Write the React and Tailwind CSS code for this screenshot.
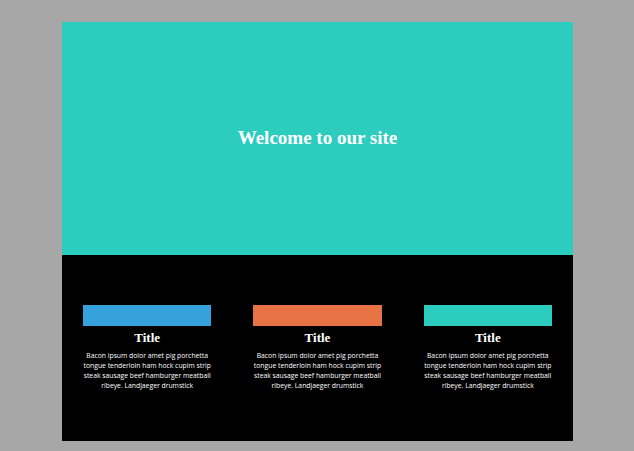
const cards = [
  { color: 'bg-[#36a2dc]' },
  { color: 'bg-[#e87446]' },
  { color: 'bg-[#2ccdbe]' },
];

const Card = ({ color }) => {
  return (
    <div className="flex flex-col items-center px-[21px]">
      <div className={`h-[21px] w-full ${color}`} />
      <h2 className="mt-[4px] text-[13px] leading-[16px] font-bold text-white font-['Liberation_Serif',serif]">Title</h2>
      <p className="mt-[5px] -mx-[2px] text-center text-[6.8px] leading-[10px] font-medium text-white font-['Open_Sans',sans-serif]">
        Bacon ipsum dolor amet pig porchetta tongue tenderloin ham hock cupim strip steak sausage beef hamburger meatball ribeye. Landjaeger drumstick
      </p>
    </div>
  );
};

export default function App() {
  return (
    <div className="min-h-[451px] w-full bg-[#a7a7a7] pt-[22px] pb-[10px]">
      <div className="ml-[62px] w-[511px]">
        <header className="flex h-[233px] items-center justify-center bg-[#2ccdbe]">
          <h1 className="text-[19px] font-bold text-white font-['Liberation_Serif',serif]">Welcome to our site</h1>
        </header>
        <section className="grid h-[186px] grid-cols-3 bg-black pt-[50px]">
          {cards.map((c, i) => (
            <Card key={i} color={c.color} />
          ))}
        </section>
      </div>
    </div>
  );
}
